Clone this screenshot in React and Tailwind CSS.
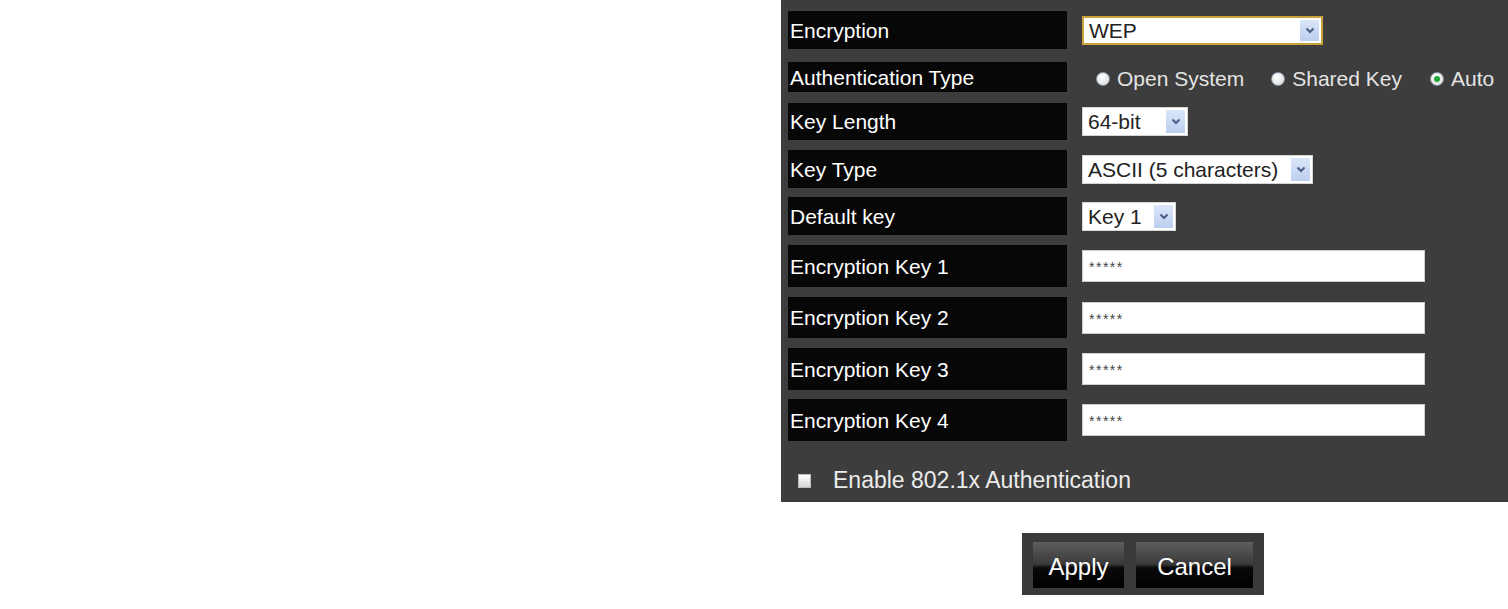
import React from 'react';

const font = { fontFamily: '"Liberation Sans", Arial, sans-serif' };

const Chevron = () => (
  <svg width="10" height="7" viewBox="0 0 10 7">
    <polyline points="1.5,1.5 5,5 8.5,1.5" fill="none" stroke="#4a5c88" strokeWidth="2" />
  </svg>
);

const FakeSelect = ({ value, width, focused }) => (
  <div
    className={`flex h-[29px] items-stretch bg-white ${width} ${
      focused ? 'border-2 border-[#c9a23a]' : 'border border-[#d6d6d6]'
    }`}
  >
    <div className="flex flex-1 items-center pl-[5px] text-[21px] leading-none text-[#222]">{value}</div>
    <div className="my-[2px] mr-[2px] flex w-[19px] items-center justify-center bg-[linear-gradient(to_bottom,#dbe6f8,#bccff0)]">
      <Chevron />
    </div>
  </div>
);

const TextBox = () => (
  <div className="flex h-[32px] w-[343px] items-start border border-[#cfcfcf] bg-white pl-[6px] pt-[9px] text-[14px] leading-none tracking-[1.5px] text-[#444]">
    *****
  </div>
);

const Radio = ({ label, checked }) => (
  <div className="flex items-center">
    <span className="flex h-[14px] w-[14px] items-center justify-center rounded-full border border-[#8a9aa8] bg-[radial-gradient(circle_at_40%_35%,#ffffff,#d6d6d6)]">
      {checked && <span className="h-[6px] w-[6px] rounded-full bg-[#1fa83a]" />}
    </span>
    <span className="ml-[7px] text-[21px] leading-none text-[#e4e4e4]">{label}</span>
  </div>
);

const Row = ({ label, h, mt, children }) => (
  <div className={`flex items-center ${h} ${mt}`}>
    <div className="flex h-full w-[279px] items-center bg-[#070707] pl-[2px] text-[21px] leading-none text-white">
      {label}
    </div>
    <div className="ml-[15px] flex items-center">{children}</div>
  </div>
);

export default function App() {
  return (
    <div className="h-[609px] w-[1508px] overflow-hidden bg-white" style={font}>
      <div className="ml-[781px] flex h-[502px] w-[727px] flex-col bg-[#3d3d3d] pl-[7px]">
        <Row label="Encryption" h="h-[38px]" mt="mt-[11px]">
          <FakeSelect value="WEP" width="w-[241px]" focused />
        </Row>
        <Row label="Authentication Type" h="h-[30px]" mt="mt-[13px]">
          <div className="flex items-center pt-[3px] pl-[14px]">
            <Radio label="Open System" />
            <div className="ml-[27px]"><Radio label="Shared Key" /></div>
            <div className="ml-[28px]"><Radio label="Auto" checked /></div>
          </div>
        </Row>
        <Row label="Key Length" h="h-[37px]" mt="mt-[11px]">
          <FakeSelect value="64-bit" width="w-[106px]" />
        </Row>
        <Row label="Key Type" h="h-[38px]" mt="mt-[10px]">
          <FakeSelect value="ASCII (5 characters)" width="w-[231px]" />
        </Row>
        <Row label="Default key" h="h-[38px]" mt="mt-[9px]">
          <FakeSelect value="Key 1" width="w-[94px]" />
        </Row>
        <Row label="Encryption Key 1" h="h-[42px]" mt="mt-[10px]">
          <TextBox />
        </Row>
        <Row label="Encryption Key 2" h="h-[41px]" mt="mt-[10px]">
          <TextBox />
        </Row>
        <Row label="Encryption Key 3" h="h-[42px]" mt="mt-[10px]">
          <TextBox />
        </Row>
        <Row label="Encryption Key 4" h="h-[42px]" mt="mt-[9px]">
          <TextBox />
        </Row>
        <div className="mt-[28px] flex items-center pl-[10px]">
          <span className="h-[14px] w-[13px] border border-[#bbb] bg-[linear-gradient(to_bottom,#ffffff,#d8d8d8)]" />
          <span className="ml-[22px] text-[23px] leading-none text-[#ececec]">Enable 802.1x Authentication</span>
        </div>
      </div>
      <div className="ml-[1022px] mt-[31px] flex h-[62px] w-[242px] gap-[12px] bg-[#3a3a3a] pl-[11px] pt-[9px]">
        {['Apply', 'Cancel'].map((t) => (
          <button
            key={t}
            className={`flex h-[46px] items-center justify-center bg-[linear-gradient(to_bottom,#5e5e5e,#3a3a3a_48%,#0a0a0a_56%,#000)] pt-[3px] text-[24px] leading-none text-white ${
              t === 'Apply' ? 'w-[91px]' : 'w-[117px]'
            }`}
          >
            {t}
          </button>
        ))}
      </div>
    </div>
  );
}
